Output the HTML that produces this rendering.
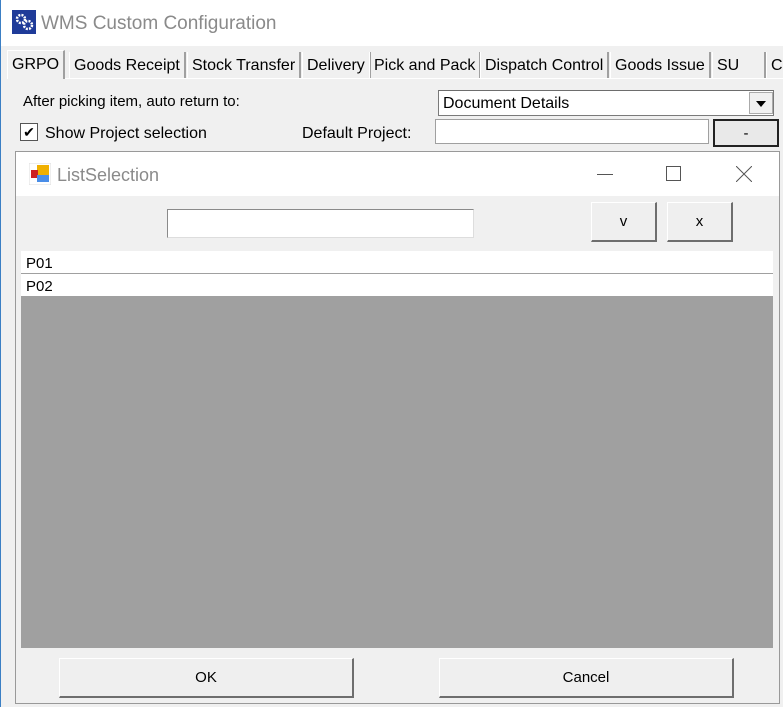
<!DOCTYPE html>
<html><head><meta charset="utf-8"><style>
*{box-sizing:border-box;margin:0;padding:0}
body{width:783px;height:707px;overflow:hidden;background:#f0f0f0;font-family:"Liberation Sans",sans-serif;font-size:15px;color:#000;position:relative}
.a{position:absolute}
.btn{position:absolute;background:#efefef;border:1px solid #adadad;border-right:2px solid #6e6e6e;border-bottom:2px solid #6e6e6e;border-top-color:#fff;border-left-color:#fff;display:flex;align-items:center;justify-content:center;font-size:15px}
.tab{position:absolute;top:52px;height:26px;border-left:1px solid #fff;border-right:2px solid #a0a0a0;padding:5px 4px 0;font-size:16px;white-space:nowrap}
</style></head><body>
<div class="a" style="left:0;top:0;width:783px;height:46px;background:#fff"></div>
<div class="a" style="left:0;top:0;width:1px;height:707px;background:#3b7fc4"></div>
<div class="a" style="left:12px;top:10px;width:24px;height:24px;background:#1f3b99">
<svg width="24" height="24"><circle cx="9" cy="9" r="4" fill="none" stroke="#fff" stroke-width="2.5" stroke-dasharray="2 1.2"/><circle cx="16" cy="15" r="4" fill="none" stroke="#fff" stroke-width="2.5" stroke-dasharray="2 1.2"/></svg></div>
<div class="a" style="left:41px;top:13px;font-size:19px;color:#8a8a8a">WMS Custom Configuration</div>
<div class="a" style="left:7px;top:78px;width:776px;height:1px;background:#fff"></div>
<div class="tab" style="left:7px;top:50px;height:29px;background:#f0f0f0;border-top:1px solid #fff;padding-top:5px">GRPO</div>
<div class="tab" style="left:69px">Goods Receipt</div>
<div class="tab" style="left:187px">Stock Transfer</div>
<div class="tab" style="left:302px">Delivery</div>
<div class="tab" style="left:369px">Pick and Pack</div>
<div class="tab" style="left:480px">Dispatch Control</div>
<div class="tab" style="left:610px">Goods Issue</div>
<div class="tab" style="left:712px;width:54px">SU</div>
<div class="tab" style="left:766px">C</div>
<div class="a" style="left:23px;top:93px;font-size:15px">After picking item, auto return to:</div>
<div class="a" style="left:438px;top:90px;width:336px;height:26px;background:#fff;border:1px solid #7a7a7a;border-top-color:#6d6d6d;padding:4px 4px;font-size:16px">Document Details</div>
<div class="a" style="left:749px;top:92px;width:24px;height:22px;background:#f0f0f0;border:1px solid #aaa"><svg width="22" height="20"><path d="M6 8h10l-5 6z" fill="#000"/></svg></div>
<div class="a" style="left:20px;top:123px;width:18px;height:18px;background:#fff;border:1px solid #555;font-size:14px;line-height:16px;text-align:center">✔</div>
<div class="a" style="left:45px;top:125px;font-size:16px">Show Project selection</div>
<div class="a" style="left:302px;top:125px;font-size:16px">Default Project:</div>
<div class="a" style="left:435px;top:119px;width:274px;height:25px;background:#fff;border:1px solid #a0a0a0"></div>
<div class="btn" style="left:713px;top:119px;width:66px;height:28px;border:2px solid #222;background:#e9e9e9">-</div>
<div class="a" style="left:15px;top:151px;width:765px;height:553px;border:1px solid #999;background:#f0f0f0">
<div class="a" style="left:0;top:0;width:763px;height:44px;background:#fff"></div>
<div class="a" style="left:13px;top:11px;width:22px;height:22px">
<svg width="22" height="22"><rect x="0" y="0" width="22" height="22" fill="#fff" stroke="#ddd"/><rect x="8" y="2" width="12" height="10" fill="#f0b000"/><rect x="2" y="7" width="7" height="8" fill="#cc2222"/><rect x="8" y="12" width="12" height="7" fill="#4a8ee8"/></svg></div>
<div class="a" style="left:41px;top:13px;font-size:18px;color:#8a8a8a">ListSelection</div>
<div class="a" style="left:581px;top:22px;width:16px;height:1px;background:#555"></div>
<div class="a" style="left:650px;top:14px;width:15px;height:15px;border:1px solid #555"></div>
<svg class="a" style="left:720px;top:14px" width="16" height="16"><path d="M0 0L16 16M16 0L0 16" stroke="#555" stroke-width="1"/></svg>
<div class="a" style="left:151px;top:57px;width:307px;height:29px;background:#fff;border:1px solid #8a8a8a;border-right-color:#ddd;border-bottom-color:#ddd"></div>
<div class="btn" style="left:575px;top:50px;width:66px;height:40px">v</div>
<div class="btn" style="left:651px;top:50px;width:66px;height:40px">x</div>
<div class="a" style="left:5px;top:99px;width:752px;height:45px;background:#fff"></div>
<div class="a" style="left:10px;top:103px;font-size:15px">P01</div>
<div class="a" style="left:5px;top:121px;width:752px;height:1px;background:#a0a0a0"></div>
<div class="a" style="left:10px;top:126px;font-size:15px">P02</div>
<div class="a" style="left:5px;top:144px;width:752px;height:352px;background:#a0a0a0"></div>
<div class="btn" style="left:43px;top:506px;width:295px;height:40px;font-family:'Liberation Sans Narrow','Liberation Sans',sans-serif">OK</div>
<div class="btn" style="left:423px;top:506px;width:295px;height:40px;font-family:'Liberation Sans Narrow','Liberation Sans',sans-serif">Cancel</div>
</div>
</body></html>
